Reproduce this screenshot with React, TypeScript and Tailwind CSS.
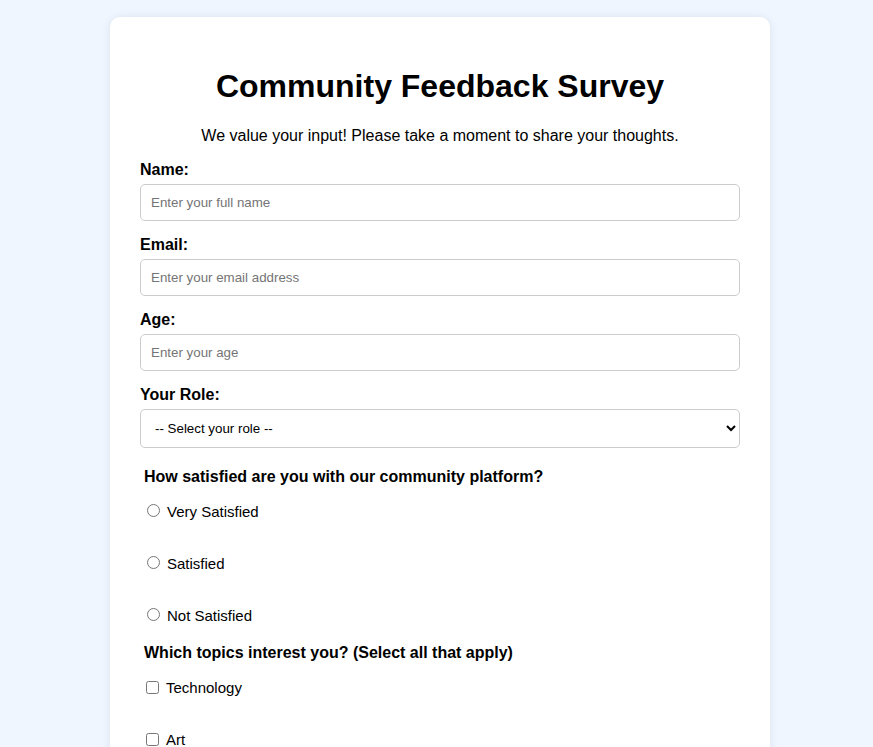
const ROLES = ["Student", "Professional", "Volunteer", "Other"];
const SATISFACTION = ["Very Satisfied", "Satisfied", "Not Satisfied"];
const TOPICS = ["Technology", "Art", "Music", "Sports"];

type FieldProps = {
  label: string;
  id: string;
  type: string;
  placeholder: string;
};

function Field({ label, id, type, placeholder }: FieldProps) {
  return (
    <div className="mb-[14px]">
      <label className="mb-[5px] block pt-px text-[16px] font-bold leading-[18px]" htmlFor={id}>
        {label}
      </label>
      <input
        className="block h-[37px] w-full rounded-[5px] border border-[#ccc] px-[10px] text-[13.33px] placeholder:text-[#757575] focus:outline-none"
        id={id}
        placeholder={placeholder}
        type={type}
      />
    </div>
  );
}

export default function App() {
  return (
    <div
      className="min-h-screen bg-[#eff6ff] pb-5 pt-[17px] text-black"
      style={{ fontFamily: '"Liberation Sans", Arial, sans-serif' }}
    >
      <div className="ml-[110px] w-[660px] rounded-[10px] bg-white px-[30px] pb-[30px] pt-[51px] shadow-[0_0_10px_rgba(0,0,0,0.08)]">
        <h1 className="text-center text-[32px] font-bold leading-[37px]">
          Community Feedback Survey
        </h1>
        <p className="mt-[22px] text-center text-[16px] leading-[18px]">
          We value your input! Please take a moment to share your thoughts.
        </p>

        <form className="mt-[15px]">
          <Field id="name" label="Name:" placeholder="Enter your full name" type="text" />
          <Field id="email" label="Email:" placeholder="Enter your email address" type="email" />
          <Field id="age" label="Age:" placeholder="Enter your age" type="number" />

          <label className="mb-[5px] block pt-px text-[16px] font-bold leading-[18px]" htmlFor="role">
            Your Role:
          </label>
          <select
            className="block h-[39px] w-full rounded-[5px] border border-[#ccc] bg-white px-[10px] text-[13.33px]"
            defaultValue=""
            id="role"
          >
            <option value="">-- Select your role --</option>
            {ROLES.map((role) => (
              <option key={role}>{role}</option>
            ))}
          </select>

          <div className="mt-[20px] pl-1">
            <p className="text-[16px] font-bold leading-[18px]">
              How satisfied are you with our community platform?
            </p>
            <div className="mt-[17px] flex flex-col gap-[34px]">
              {SATISFACTION.map((s) => (
                <label className="flex h-[18px] items-center text-[15px]" key={s}>
                  <input className="-mt-[3px] ml-[3px] mr-[7px] h-[13px] w-[13px]" name="satisfaction" type="radio" />
                  {s}
                </label>
              ))}
            </div>
          </div>

          <div className="mt-[19px] pl-1">
            <p className="text-[16px] font-bold leading-[18px]">
              Which topics interest you? (Select all that apply)
            </p>
            <div className="mt-[17px] flex flex-col gap-[34px]">
              {TOPICS.map((t) => (
                <label className="flex h-[18px] items-center text-[15px]" key={t}>
                  <input className="-mt-[2px] ml-[2px] mr-[7px] h-[13px] w-[13px]" type="checkbox" />
                  {t}
                </label>
              ))}
            </div>
          </div>

          <label className="mb-[6px] mt-[24px] block text-[16px] font-bold leading-[18px]" htmlFor="comments">
            Additional Comments:
          </label>
          <textarea
            className="block h-[100px] w-full rounded-[5px] border border-[#ccc] p-[10px] text-[13.33px] placeholder:text-[#757575]"
            id="comments"
            placeholder="Share any other thoughts"
          />
          <button
            className="mt-5 w-full rounded-[5px] bg-[#2563eb] py-3 text-[16px] font-bold text-white"
            type="submit"
          >
            Submit Feedback
          </button>
        </form>
      </div>
    </div>
  );
}
